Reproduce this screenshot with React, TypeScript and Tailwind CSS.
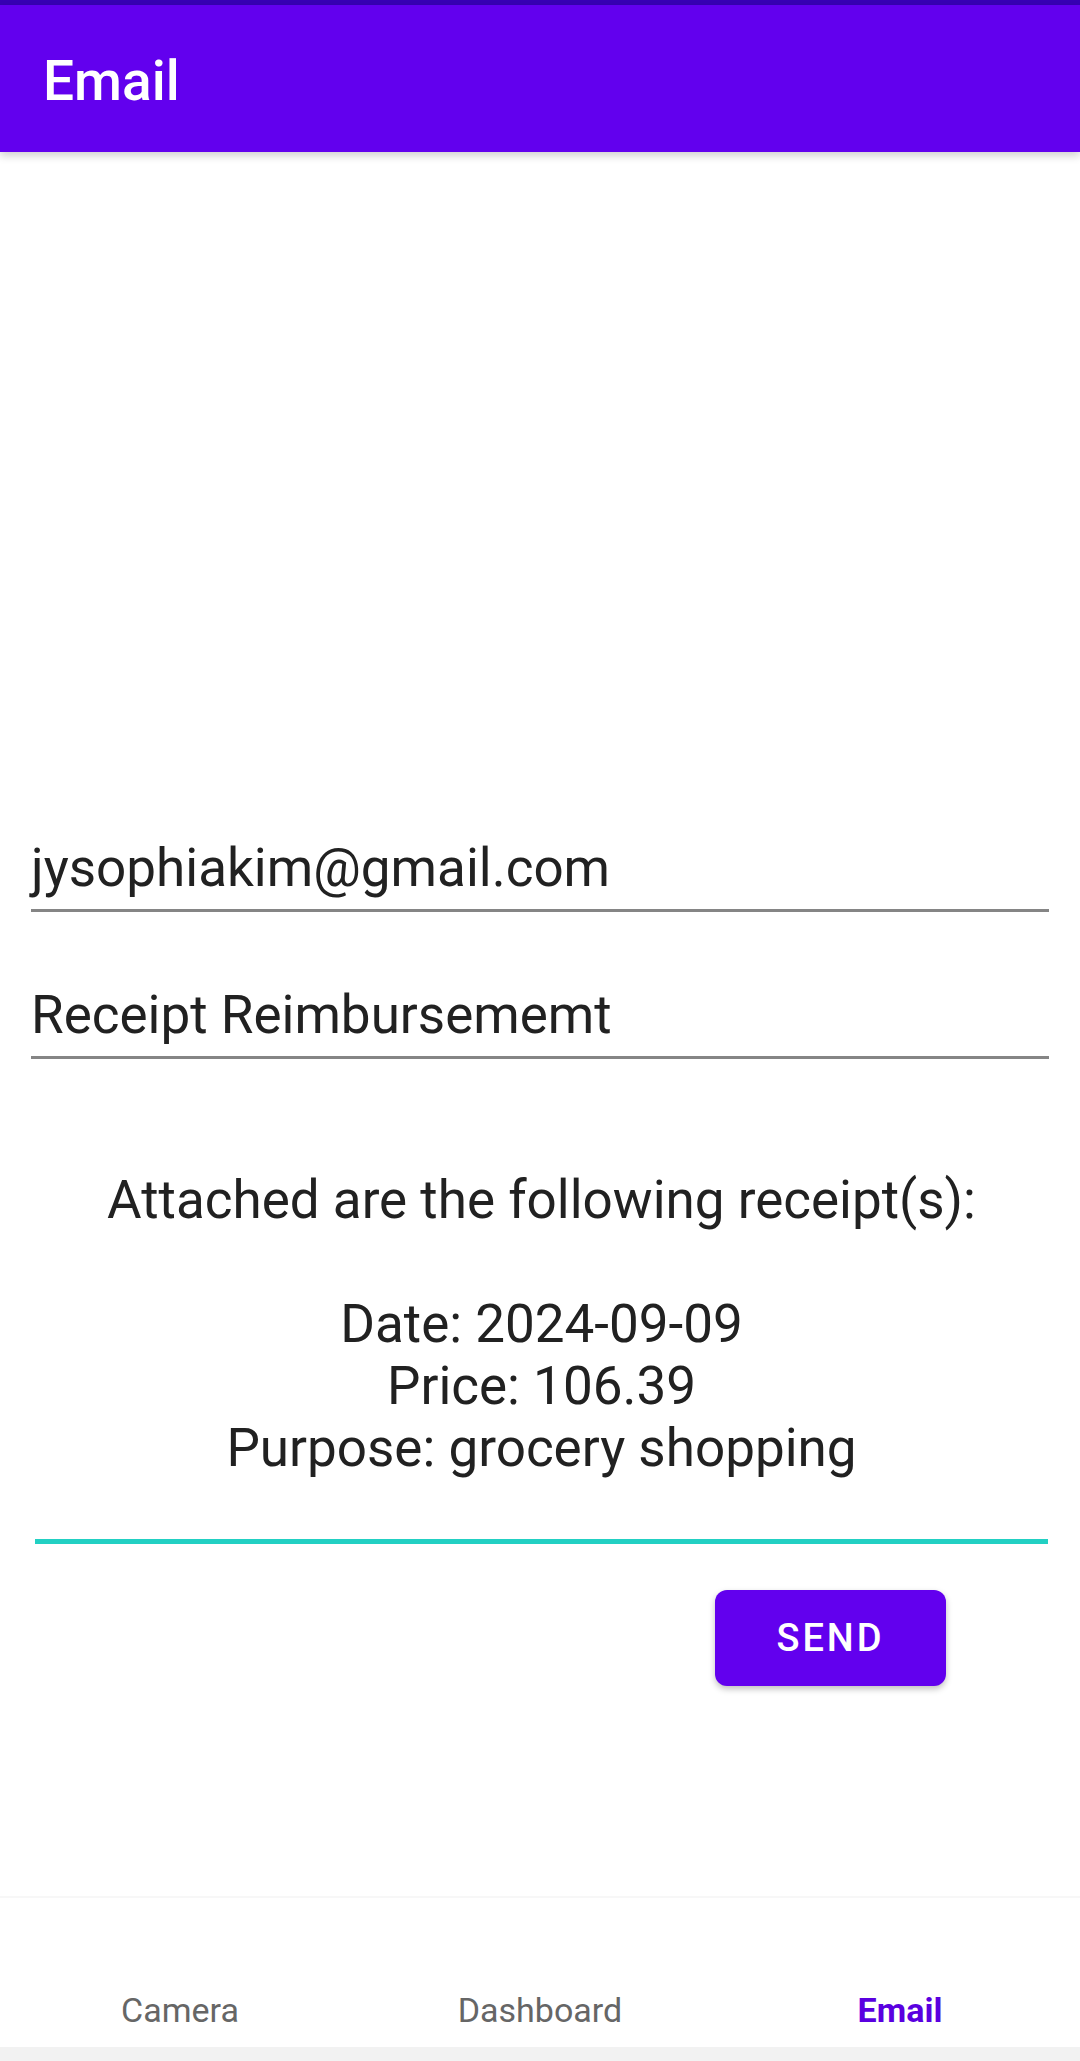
import React from "react";

const bodyLines = [
  "Attached are the following receipt(s):",
  "",
  "Date: 2024-09-09",
  "Price: 106.39",
  "Purpose: grocery shopping",
];

function UnderlineField({ value, gap }: { value: string; gap: string }) {
  return (
    <div className={`px-[31px] ${gap}`}>
      <div className="text-[53px] leading-[63px] text-[#212121]">{value}</div>
      <div className="mt-[9px] h-[3px] bg-[#858585]" />
    </div>
  );
}

export default function App() {
  const tabs = ["Camera", "Dashboard", "Email"];
  const active = "Email";

  return (
    <div className="w-[1080px] h-[2061px] flex flex-col bg-white font-['Roboto',sans-serif] overflow-hidden">
      {/* status strip */}
      <div className="h-[5px] bg-[#3700B3]" />

      {/* app bar */}
      <div className="relative z-10 h-[147px] bg-[#6200EE] flex items-center px-[43px] pt-[4px] shadow-[0_4px_8px_rgba(0,0,0,0.18)]">
        <h1 className="text-[55px] leading-[70px] font-medium text-white">Email</h1>
      </div>

      {/* form */}
      <div className="flex-1 flex flex-col pt-[685px]">
        <UnderlineField value="jysophiakim@gmail.com" gap="" />
        <UnderlineField value="Receipt Reimbursememt" gap="mt-[72px]" />

        <div className="mt-[110px] pl-[35px] pr-[32px]">
          <div className="text-center text-[53px] leading-[62px] text-[#212121]">
            {bodyLines.map((line, i) => (
              <div key={i} className="h-[62px]">
                {line}
              </div>
            ))}
          </div>
          <div className="mt-[60px] h-[5px] bg-[#22d0c3]" />
        </div>

        <div className="mt-[46px] flex justify-end pr-[134px]">
          <button className="w-[231px] h-[96px] rounded-[12px] bg-[#6200EE] text-white text-[38px] font-medium tracking-[3px] shadow-[0_3px_6px_rgba(0,0,0,0.25)]">
            SEND
          </button>
        </div>
      </div>

      {/* bottom navigation */}
      <div className="h-[151px] bg-white border-t-[2px] border-[#f7f7f7] grid grid-cols-3 items-end pb-[17px]">
        {tabs.map((tab) => (
          <div
            key={tab}
            className={`text-center text-[34px] leading-[40px] ${
              tab === active ? "font-bold text-[#5a00e0]" : "text-[#666666]"
            }`}
          >
            {tab}
          </div>
        ))}
      </div>
      <div className="h-[14px] bg-[#f2f2f2]" />
    </div>
  );
}
